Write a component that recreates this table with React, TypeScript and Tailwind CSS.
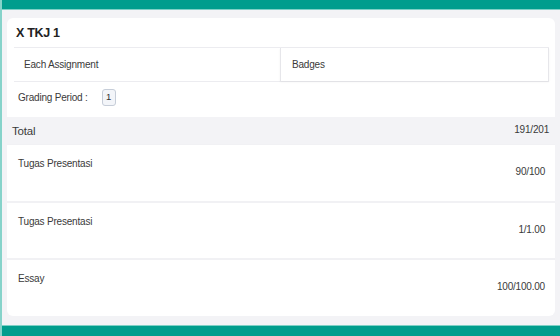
import React from "react";

const rows = [
  { label: "Tugas Presentasi", value: "90/100", h: "h-[57px]" },
  { label: "Tugas Presentasi", value: "1/1.00", h: "h-[57px]" },
  { label: "Essay", value: "100/100.00", h: "h-[57px]" },
];

export default function App() {
  return (
    <div
      className="w-[560px] h-[336px] bg-[#f3f3f6] flex flex-col overflow-hidden border-l-2 border-[#86d3ca] text-[#3a3a3a]"
      style={{ fontFamily: '"Liberation Sans", Arial, sans-serif' }}
    >
      <div className="h-[10px] shrink-0 bg-[#009d8d] border-b border-[#7fd0c6]" />
      <div className="flex-1 pt-[8px] pl-[5px] pr-[5px] pb-[9px]">
        <div className="h-[298px] bg-white rounded-[6px] flex flex-col overflow-hidden">
          <div className="h-[29px] shrink-0 flex items-center pl-[9px] pt-[1px] text-[12.5px] font-bold text-[#222] tracking-[-0.3px]">
            X TKJ 1
          </div>
          <div className="ml-[7px] mr-[6px] h-[35px] shrink-0 flex border-t border-b border-[#ececf0] text-[10px] tracking-[-0.2px]">
            <div className="w-[266px] flex items-center pl-[10px]">Each Assignment</div>
            <div className="flex-1 flex items-center pl-[11px] border-l border-r border-[#e6e6ea] shadow-[0_1px_2px_rgba(0,0,0,0.06)]">
              Badges
            </div>
          </div>
          <div className="h-[35px] shrink-0 flex items-center pl-[11px] pb-[5px] text-[10px] tracking-[-0.2px]">
            <span>Grading Period :</span>
            <span className="ml-[14px] w-[14px] h-[17px] flex items-center justify-center rounded-[3px] border border-[#c6cdd8] bg-[#f3f5f9] text-[9.5px] text-[#333]">
              1
            </span>
          </div>
          <div className="h-[27px] shrink-0 bg-[#f3f3f6] flex items-start justify-between pl-[5px] pr-[6px]">
            <span className="text-[11.5px] tracking-[-0.2px] pt-[6px]">Total</span>
            <span className="text-[10px] tracking-[-0.2px] pt-[5px]">191/201</span>
          </div>
          {rows.map((r, i) => (
            <div
              key={i}
              className={`${r.h} shrink-0 flex items-start justify-between pl-[11px] pr-[10px] ${i > 0 ? "border-t-2 border-[#f1f1f4]" : "border-t border-[#f1f1f4]"}`}
            >
              <span className="text-[10px] tracking-[-0.2px] pt-[11px]">{r.label}</span>
              <span className="text-[10px] tracking-[-0.2px] pt-[19px]">{r.value}</span>
            </div>
          ))}
        </div>
      </div>
      <div className="h-[11px] shrink-0 bg-[#009d8d] border-t border-[#7fd0c6]" />
    </div>
  );
}
